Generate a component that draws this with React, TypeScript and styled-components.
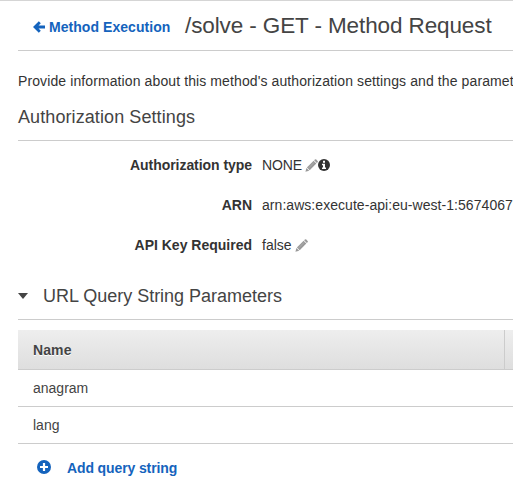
import React from "react";
import styled, { createGlobalStyle } from "styled-components";

const GlobalStyle = createGlobalStyle`
  * { box-sizing: border-box; }
  body {
    margin: 0;
    background: #fff;
    color: #333;
    font: 14px/20px "Liberation Sans", Arial, sans-serif;
    overflow: hidden;
  }
`;

const Page = styled.main`
  height: 501px;
  padding-left: 18px;
  border-top: 1px solid #d5d5d5;
  overflow: hidden;
  white-space: nowrap;
`;

const Header = styled.header`
  display: flex;
  height: 50px;
  padding-left: 15px;
  border-bottom: 1px solid #ccc;
`;

const BackLink = styled.a`
  display: flex;
  align-items: center;
  gap: 4px;
  width: 152px;
  height: 20px;
  margin-top: 16px;
  color: #1463bd;
  font-weight: bold;
`;

const Title = styled.h1`
  margin: 10px 0 0;
  color: #444;
  font-size: 22.5px;
  font-weight: normal;
  line-height: 30px;
`;

const Intro = styled.p`
  margin: 20px 0 0;
`;

const SectionTitle = styled.h2<{ $height: number; $padTop?: number }>`
  display: flex;
  align-items: center;
  height: ${(p) => p.$height}px;
  margin: 0;
  padding-top: ${(p) => p.$padTop ?? 0}px;
  border-bottom: 1px solid #ccc;
  color: #444;
  font-size: 18px;
  font-weight: normal;
`;

const Settings = styled.dl`
  display: grid;
  grid-template-columns: 234px 1fr;
  grid-auto-rows: 20px;
  column-gap: 10px;
  row-gap: 20px;
  height: 132px;
  margin: 0;
  padding-top: 14px;
`;

const Label = styled.dt`
  font-weight: bold;
  text-align: right;
`;

const Value = styled.dd`
  display: flex;
  align-items: center;
  margin: 0;
  svg:first-of-type { margin-left: 3px; }
`;

const Caret = styled.span`
  width: 0;
  margin-right: 15px;
  border: 5px solid transparent;
  border-top: 6px solid #444;
  border-bottom: 0;
`;

const Table = styled.div`
  margin-top: 10px;
  color: #444;
`;

const HeadRow = styled.div`
  display: grid;
  grid-template-columns: 487px 1fr;
  height: 40px;
  border-bottom: 1px solid #ccc;
  background: linear-gradient(#eee, #dedede);
  font-weight: bold;
  line-height: 41px;
  text-shadow: 0 1px 0 #fff;
`;

const HeadCell = styled.div`
  height: 39px;
  padding-left: 15px;
  border-right: 1px solid #ccc;
`;

const Row = styled.div`
  height: 37px;
  padding-left: 15px;
  border-bottom: 1px solid #ccc;
  line-height: 36px;
`;

const AddLink = styled.a`
  display: flex;
  align-items: center;
  gap: 16px;
  height: 20px;
  margin: 14px 0 0 19px;
  color: #1463bd;
  font-weight: bold;
  svg { margin-top: -2px; }
`;

const Copy = styled.span<{ $spacing?: number }>`
  letter-spacing: ${(p) => p.$spacing ?? 0}px;
`;

const ArrowIcon = () => (
  <svg width="12" height="12" viewBox="0 0 12 12" fill="none" stroke="currentColor" strokeWidth="2.8">
    <path d="M6.8 1.2 2 6l4.8 4.8M2.4 6H12" />
  </svg>
);

const PencilIcon = () => (
  <svg width="13" height="13" viewBox="0 0 13 13" fill="#999">
    <path d="M9.1 1.3 9.9.6q.7-.7 1.4 0l1.3 1.3q.7.7 0 1.4l-.8.8z" />
    <path d="M8.6 1.8 11.3 4.6 4.7 11.2 1.9 8.4z" />
    <path d="M1.4 8.9 4.2 11.7.4 12.7z" />
    <path d="M3.2 9.4 9.2 3.4" stroke="#c4c4c4" strokeWidth=".5" />
  </svg>
);

const InfoIcon = () => (
  <svg width="12" height="12" viewBox="0 0 12 12">
    <circle cx="6" cy="6" r="6" fill="#333" />
    <path d="M5 1.8h2v1.9H5zM4 4.8h3v3.7h1V10H4V8.5h1V6.2H4z" fill="#fff" />
  </svg>
);

const PlusIcon = () => (
  <svg width="14" height="14" viewBox="0 0 14 14">
    <circle cx="7" cy="7" r="7" fill="currentColor" />
    <path d="M7 3v8M3 7h8" stroke="#fff" strokeWidth="2.2" />
  </svg>
);

export default function App() {
  return (
    <>
      <GlobalStyle />
      <Page>
        <Header>
          <BackLink><ArrowIcon /><Copy $spacing={0.05}>Method Execution</Copy></BackLink>
          <Title><Copy $spacing={-0.11}>/solve - GET - Method Request</Copy></Title>
        </Header>
        <Intro><Copy $spacing={0.105}>Provide information about this method's authorization settings and the paramet</Copy></Intro>
        <SectionTitle $height={50} $padTop={2}><Copy $spacing={0.09}>Authorization Settings</Copy></SectionTitle>
        <Settings>
          <Label><Copy $spacing={-0.05}>Authorization type</Copy></Label>
          <Value><Copy $spacing={-0.15}>NONE</Copy><PencilIcon /><InfoIcon /></Value>
          <Label><Copy>ARN</Copy></Label>
          <Value><Copy $spacing={0.05}>arn:aws:execute-api:eu-west-1:5674067</Copy></Value>
          <Label><Copy>API Key Required</Copy></Label>
          <Value><Copy>false</Copy><PencilIcon /></Value>
        </Settings>
        <SectionTitle $height={47}><Caret /><Copy $spacing={-0.02}>URL Query String Parameters</Copy></SectionTitle>
        <Table>
          <HeadRow><HeadCell><Copy $spacing={0.1}>Name</Copy></HeadCell></HeadRow>
          <Row>anagram</Row>
          <Row>lang</Row>
        </Table>
        <AddLink><PlusIcon /><Copy $spacing={-0.12}>Add query string</Copy></AddLink>
      </Page>
    </>
  );
}
